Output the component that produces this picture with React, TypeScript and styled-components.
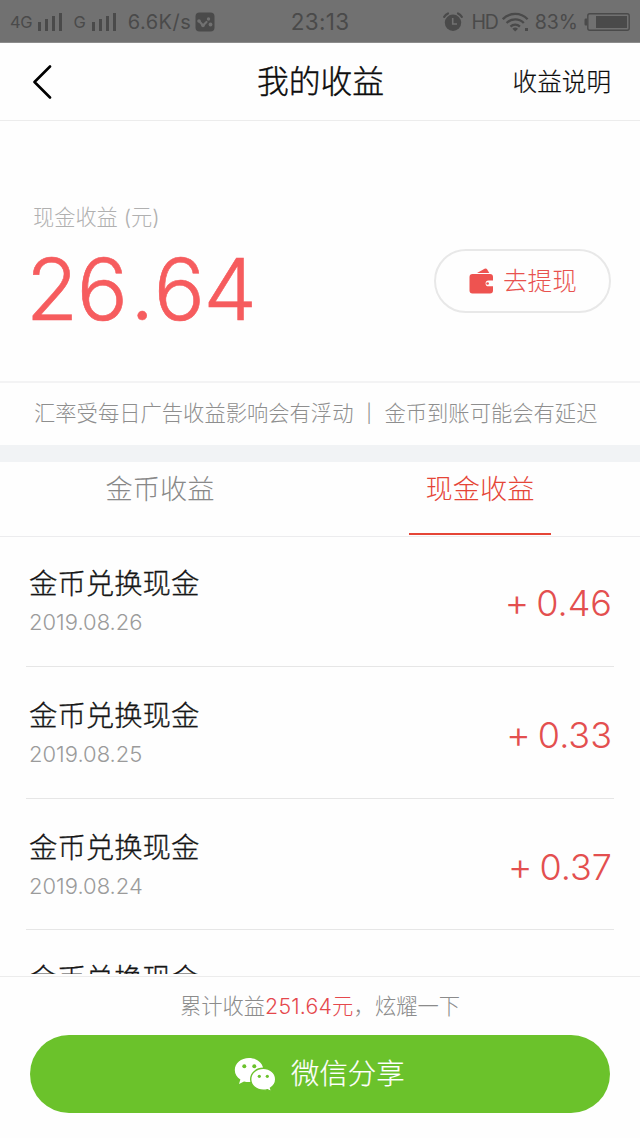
import React from "react";
import styled, { createGlobalStyle } from "styled-components";

const GlobalStyle = createGlobalStyle`
  * { box-sizing: border-box; }
  body { margin: 0; background: #fefefe; }
`;

const Screen = styled.div`
  width: 640px;
  height: 1138px;
  display: flex;
  flex-direction: column;
  overflow: hidden;
  background: #fefefe;
  font-family: Inter, "Noto Sans CJK SC", sans-serif;
  font-weight: 300;
  white-space: nowrap;
`;

const StatusBar = styled.header`
  flex: none;
  height: 43px;
  display: flex;
  justify-content: space-between;
  align-items: center;
  padding: 1px 10px 0;
  background: #717171;
  border-bottom: 1px solid #8c8c8c;
  color: #4a4a4a;
  font-weight: 400;
`;

const StatusGroup = styled.div<{ $width: number; $end?: boolean }>`
  width: ${(p) => p.$width}px;
  display: flex;
  align-items: center;
  justify-content: ${(p) => (p.$end ? "flex-end" : "flex-start")};
`;

const StatusText = styled.span<{ $size: number; $spacing?: number; $ml?: number }>`
  font-size: ${(p) => p.$size}px;
  letter-spacing: ${(p) => p.$spacing ?? 0}px;
  margin-left: ${(p) => p.$ml ?? 0}px;
  line-height: 24px;
  padding-top: 1px;
`;

const StatusIcon = styled.svg<{ $ml?: number }>`
  flex: none;
  display: block;
  margin-left: ${(p) => p.$ml ?? 0}px;
`;

const NavBar = styled.nav`
  flex: none;
  height: 78px;
  display: grid;
  grid-template-columns: 160px 1fr 160px;
  align-items: center;
  padding: 0 29px 0 32px;
  border-bottom: 1px solid #ececec;
  color: #0c0c0c;
`;

const BackButton = styled.button`
  display: flex;
  padding: 0;
  border: 0;
  background: none;
  color: #000;
`;

const NavTitle = styled.h1`
  margin: 0 2px 0 0;
  font-size: 31.8px;
  font-weight: 300;
  -webkit-text-stroke: 0.4px currentColor;
  line-height: 46px;
  text-align: center;
`;

const NavLink = styled.a`
  font-size: 24.6px;
  line-height: 36px;
  -webkit-text-stroke: 0.2px currentColor;
  text-align: right;
`;

const Summary = styled.section`
  flex: none;
  height: 262px;
  display: flex;
  justify-content: space-between;
  padding: 79px 29px 0 31px;
  border-bottom: 2px solid #f3f3f4;
`;

const Balance = styled.div`
  display: flex;
  flex-direction: column;
`;

const BalanceLabel = styled.div`
  padding-left: 2px;
  font-size: 21.2px;
  line-height: 34px;
  color: #b0b0b0;
`;

const BalanceValue = styled.div`
  margin-top: 6px;
  font-size: 85px;
  line-height: 100px;
  letter-spacing: -1.5px;
  margin-left: -5px;
  color: #f65c5e;
  -webkit-text-stroke: 0.6px currentColor;
`;

const DecimalPoint = styled.span`
  margin: 0 1px 0 4px;
`;

const WithdrawButton = styled.button`
  width: 177px;
  height: 64px;
  margin-top: 49px;
  display: flex;
  align-items: center;
  padding: 0 0 0 33px;
  gap: 9px;
  border: 2px solid #e8e8e8;
  border-radius: 32px;
  background: #fefefe;
  color: #e8524f;
  font: inherit;
  font-size: 24.6px;
  line-height: 36px;
`;

const WithdrawLabel = styled.span`
  margin-top: -1px;
`;

const Notice = styled.p`
  flex: none;
  height: 62px;
  margin: 0;
  display: flex;
  padding-left: 34px;
  font-size: 21.3px;
  line-height: 60px;
  color: #8e8e8e;
`;

const NoticeBar = styled.span`
  width: 31px;
  text-align: center;
  font-size: 18px;
  padding-top: 1px;
`;

const Divider = styled.div`
  flex: none;
  height: 17px;
  background: #f1f3f5;
`;

const Tabs = styled.div`
  flex: none;
  height: 75px;
  display: flex;
  border-bottom: 1px solid #ececee;
`;

const Tab = styled.button<{ $active?: boolean }>`
  flex: 1;
  display: flex;
  flex-direction: column;
  align-items: center;
  padding: 7px 0 0;
  border: 0;
  background: none;
  color: ${(p) => (p.$active ? "#e54537" : "#888")};
  font: inherit;
  font-size: 27.2px;
  line-height: 42px;

  &::after {
    content: "";
    width: 142px;
    height: 2px;
    margin-top: 22px;
    background: ${(p) => (p.$active ? "#e54537" : "transparent")};
  }
`;

const List = styled.ul`
  flex: 1;
  min-height: 0;
  overflow: hidden;
  margin: 0 0 2px;
  padding: 0 26px;
  list-style: none;
`;

const Row = styled.li`
  height: 131.6px;
  display: flex;
  justify-content: space-between;
  padding: 28px 2px 0 3px;
  border-bottom: 1px solid #e6e6e6;

  &:first-child { height: 130px; padding-top: 26px; }
`;

const RowTitle = styled.div`
  font-size: 28.4px;
  line-height: 42px;
  -webkit-text-stroke: 0.3px currentColor;
  color: #161616;
`;

const RowDate = styled.div`
  margin-top: 2px;
  font-size: 22px;
  line-height: 30px;
  color: #9b9b9b;
`;

const Amount = styled.div`
  display: flex;
  gap: 7px;
  margin-top: 17px;
  font-size: 36px;
  line-height: 46px;
  color: #e34f4f;
`;

const AmountSign = styled.span`
  margin-top: -1px;
  font-size: 38px;
`;

const Footer = styled.footer`
  flex: none;
  height: 162px;
  display: flex;
  flex-direction: column;
  align-items: center;
  padding: 13px 30px 0;
  border-top: 1px solid #ececec;
`;

const Total = styled.p`
  margin: 0;
  font-size: 21.3px;
  line-height: 32px;
  color: #8b8b8b;
`;

const TotalValue = styled.span`
  color: #e5484c;
  letter-spacing: 0.2px;
`;

const ShareButton = styled.button`
  width: 580px;
  height: 78px;
  margin-top: 13px;
  display: flex;
  align-items: center;
  padding: 0 0 0 204px;
  gap: 15px;
  border: 0;
  border-radius: 39px;
  background: #6bc22b;
  color: #fff;
  font: inherit;
  font-size: 28.4px;
  line-height: 42px;
`;

const ShareLabel = styled.span`
  margin-top: -1px;
  -webkit-text-stroke: 0.2px currentColor;
`;

const Signal = ({ ml }: { ml: number }) => (
  <StatusIcon $ml={ml} width="26" height="20" viewBox="0 0 26 20" fill="currentColor">
    <rect x="1" y="10" width="3" height="9" />
    <rect x="8" y="7" width="3" height="12" />
    <rect x="15" y="4" width="3" height="15" />
    <rect x="22" y="1" width="3" height="18" />
  </StatusIcon>
);

const AppBadge = () => (
  <StatusIcon $ml={4} width="20" height="20" viewBox="0 0 20 20">
    <rect x="0.5" y="0.5" width="19" height="19" rx="4" fill="#4a4a4a" />
    <path d="M4 9 8 13.500 11.500 10" fill="none" stroke="#717171" strokeWidth="2.200" strokeLinejoin="round" strokeLinecap="round" />
    <circle cx="4" cy="9" r="1.800" fill="#717171" />
    <circle cx="8" cy="13.500" r="1.800" fill="#717171" />
    <circle cx="13.500" cy="7" r="1.700" fill="#717171" />
    <circle cx="15.500" cy="12.500" r="1.900" fill="#717171" />
  </StatusIcon>
);

const AlarmIcon = () => (
  <StatusIcon width="20" height="20" viewBox="0 0 20 20">
    <circle cx="10" cy="10.800" r="8.200" fill="#4a4a4a" />
    <path d="M1.200 4.800A9 9 0 0 1 5 1.500M15 1.500a9 9 0 0 1 3.800 3.300" fill="none" stroke="#4a4a4a" strokeWidth="2.200" strokeLinecap="round" />
    <path d="M9.700 6v6H14" fill="none" stroke="#717171" strokeWidth="1.600" />
  </StatusIcon>
);

const WifiIcon = () => (
  <StatusIcon $ml={4} width="27" height="20" viewBox="0 0 27 20" fill="none" stroke="currentColor" strokeWidth="2.300">
    <path d="M.8 7.200a17.200 17.200 0 0 1 24.800 0M4.600 11a12 12 0 0 1 17.200 0M8.500 14.600a6.800 6.800 0 0 1 9.400 0" />
    <path d="M13.200 19.500 10.400 16.800a4 4 0 0 1 5.600 0Z" fill="currentColor" stroke="none" />
    <rect x="23" y="16" width="3" height="3" fill="currentColor" stroke="none" />
  </StatusIcon>
);

const BatteryIcon = () => (
  <StatusIcon $ml={6} width="46" height="20" viewBox="0 0 46 20">
    <rect x="3.800" y="1.800" width="41.400" height="16.400" rx="2" fill="none" stroke="#4a4a4a" strokeWidth="1.400" />
    <path d="M3 6.500H1.500Q.5 6.500.5 8v4q0 1.500 1 1.500H3z" fill="#4a4a4a" />
    <rect x="12" y="4" width="31" height="12" fill="#4a4a4a" />
  </StatusIcon>
);

const WalletIcon = () => (
  <svg width="25" height="27" viewBox="0 0 25 27">
    <path d="M8 5 15.600.8q1.600-.8 2.600.6L20.300 5Z" fill="#ee5350" />
    <path d="M3.500 6H21q3 0 3 3v3.500h-4.500a2.800 2.800 0 0 0 0 5.800H24V22.500q0 3-3 3H3.500q-3 0-3-3V9q0-3 3-3Z" fill="#ee5350" />
    <circle cx="18.600" cy="15.500" r="1.300" fill="#ee5350" />
  </svg>
);

const WechatIcon = () => (
  <svg width="42" height="35" viewBox="0 0 42 35">
    <path d="M15 1C7 1 .8 6.200.8 13c0 4 2.200 7.400 5.600 9.500L5 27l5-2.600c1.600.5 3.300.7 5 .7C23 25.100 29.300 19.800 29.300 13S23 1 15 1Z" fill="#fff" />
    <path d="M29.300 11.300c-7 0-12.600 4.900-12.600 11s5.600 11 12.600 11c1.500 0 2.900-.2 4.200-.6l4.200 2.100-1.200-3.700c3.200-2 5.200-5.200 5.200-8.800 0-6.100-5.500-11-12.400-11Z" fill="#fff" stroke="#6bc22b" strokeWidth="1.400" />
    <circle cx="10.300" cy="9.200" r="2" fill="#6bc22b" />
    <circle cx="20.300" cy="9.200" r="2" fill="#6bc22b" />
    <circle cx="25.300" cy="19.300" r="1.600" fill="#6bc22b" />
    <circle cx="33.300" cy="19.300" r="1.600" fill="#6bc22b" />
  </svg>
);

const records = [
  { date: "2019.08.26", amount: "0.46" },
  { date: "2019.08.25", amount: "0.33" },
  { date: "2019.08.24", amount: "0.37" },
  { date: "", amount: "" },
];

export default function App() {
  return (
    <Screen>
      <GlobalStyle />
      <StatusBar>
        <StatusGroup $width={270}>
          <StatusText $size={16.5} $spacing={-0.3}>4G</StatusText>
          <Signal ml={5} />
          <StatusText $size={16.5} $ml={10}>G</StatusText>
          <Signal ml={5} />
          <StatusText $size={20} $spacing={0.5} $ml={11}>6.6K/s</StatusText>
          <AppBadge />
        </StatusGroup>
        <StatusText $size={22.5} $spacing={0.3}>23:13</StatusText>
        <StatusGroup $width={270} $end>
          <AlarmIcon />
          <StatusText $size={19.5} $spacing={-1.2} $ml={9}>HD</StatusText>
          <WifiIcon />
          <StatusText $size={19.5} $ml={6}>83%</StatusText>
          <BatteryIcon />
        </StatusGroup>
      </StatusBar>

      <NavBar>
        <BackButton aria-label="返回">
          <svg width="20" height="34" viewBox="0 0 20 34" fill="none" stroke="currentColor" strokeWidth="2.600" strokeLinecap="round" strokeLinejoin="round">
            <path d="M18 1.500 2.500 17 18 32.500" />
          </svg>
        </BackButton>
        <NavTitle>我的收益</NavTitle>
        <NavLink>收益说明</NavLink>
      </NavBar>

      <Summary>
        <Balance>
          <BalanceLabel>现金收益 (元)</BalanceLabel>
          <BalanceValue>
            26<DecimalPoint>.</DecimalPoint>64
          </BalanceValue>
        </Balance>
        <WithdrawButton>
          <WalletIcon />
          <WithdrawLabel>去提现</WithdrawLabel>
        </WithdrawButton>
      </Summary>

      <Notice>
        <span>汇率受每日广告收益影响会有浮动</span>
        <NoticeBar>|</NoticeBar>
        <span>金币到账可能会有延迟</span>
      </Notice>
      <Divider />

      <Tabs>
        <Tab>金币收益</Tab>
        <Tab $active>现金收益</Tab>
      </Tabs>

      <List>
        {records.map((r, i) => (
          <Row key={i}>
            <div>
              <RowTitle>金币兑换现金</RowTitle>
              {r.date && <RowDate>{r.date}</RowDate>}
            </div>
            {r.amount && (
              <Amount>
                <AmountSign>+</AmountSign>
                <span>{r.amount}</span>
              </Amount>
            )}
          </Row>
        ))}
      </List>

      <Footer>
        <Total>
          累计收益<TotalValue>251.64元</TotalValue>，炫耀一下
        </Total>
        <ShareButton>
          <WechatIcon />
          <ShareLabel>微信分享</ShareLabel>
        </ShareButton>
      </Footer>
    </Screen>
  );
}
